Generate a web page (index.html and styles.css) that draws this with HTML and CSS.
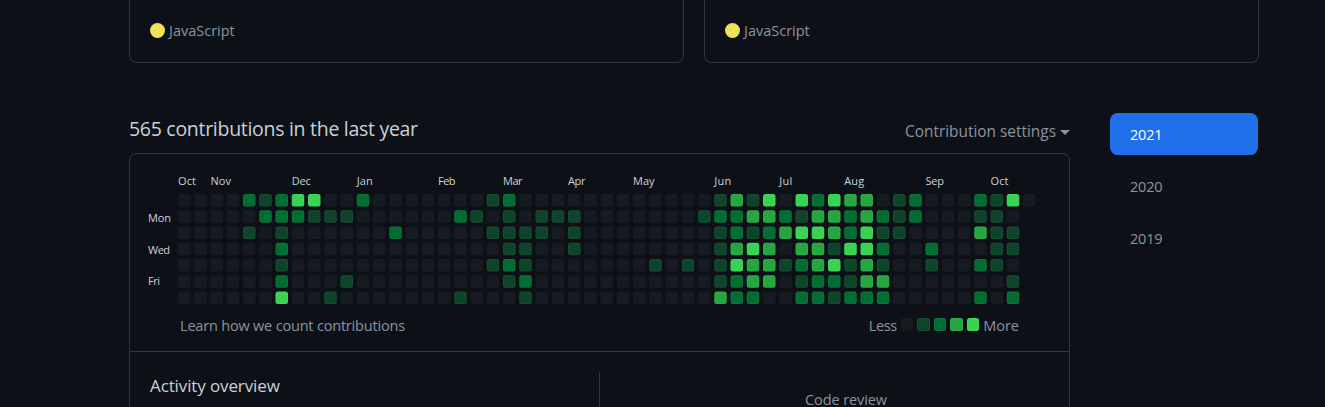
FILE: index.html
```html
<!DOCTYPE html>
<html lang="en">
<head>
<meta charset="utf-8">
<title>Contributions</title>
<link rel="stylesheet" href="styles.css">
</head>
<body>
<div class="page">
  <div class="repos">
    <div class="repo"><span class="lang-dot"></span><span class="lang">JavaScript</span></div>
    <div class="repo"><span class="lang-dot"></span><span class="lang">JavaScript</span></div>
  </div>
  <div class="columns">
    <main class="main">
      <div class="head">
        <h2 class="title">565 contributions in the last year</h2>
        <div class="settings"><span>Contribution settings</span><span class="caret"></span></div>
      </div>
      <section class="box">
        <svg class="graph" width="939" height="151" viewBox="130 154 939 151">
          <g id="cells"></g>
          <g id="months" class="label"></g>
          <g class="label">
            <text x="148" y="222" textLength="23">Mon</text>
            <text x="148" y="254" textLength="22">Wed</text>
            <text x="148" y="285" textLength="12">Fri</text>
          </g>
        </svg>
        <div class="legend">
          <span class="learn">Learn how we count contributions</span>
          <div class="scale">
            <span class="less">Less</span>
            <span class="swatches"><i class="sw l0"></i><i class="sw l1"></i><i class="sw l2"></i><i class="sw l3"></i><i class="sw l4"></i></span>
            <span class="more">More</span>
          </div>
        </div>
        <div class="activity">
          <div class="overview"><h3 class="subtitle">Activity overview</h3></div>
          <div class="radar"><span class="review">Code review</span></div>
        </div>
      </section>
    </main>
    <nav class="years">
      <a class="year selected"><span>2021</span></a>
      <a class="year"><span>2020</span></a>
      <a class="year"><span>2019</span></a>
    </nav>
  </div>
</div>
<script src="graph.js"></script>
</body>
</html>
```
FILE: graph.js
```js
// One string per week, Sunday first; each digit is a contribution level.
const weeks = `0000000 0000000 0000000 0000000 2010000 1200000 2212124 4200000 4100000
0100001 0100010 2000000 0000000 0020000 0000000 0000000 0000000 0200001 0100000
1010100 2111210 0011121 0110000 0100000 0111000 0000000 0000000 0000000 0000000
0000100 0000000 0000100 0100000 1211113 3223422 1314332 4323330 0230100 4143212
2343322 4331421 3224112 3344332 0212132 1110000 2200000 0002100 0000000 0000000
2130202 1111100 4011012 0`.split(/\s+/);
const months = [["Oct", 0, 18], ["Nov", 2, 20.5], ["Dec", 7, 19], ["Jan", 11, 16], ["Feb", 16, 17.5],
  ["Mar", 20, 19.5], ["Apr", 24, 17.5], ["May", 28, 21.5], ["Jun", 33, 17], ["Jul", 37, 13],
  ["Aug", 41, 20], ["Sep", 46, 18.5], ["Oct", 50, 18]];
const NS = "http://www.w3.org/2000/svg";
const left = 178, top0 = 194, pitch = 16.25;

function add(parent, tag, attrs) {
  const el = document.createElementNS(NS, tag);
  for (const k in attrs) el.setAttribute(k, attrs[k]);
  parent.appendChild(el);
  return el;
}

const cells = document.getElementById("cells");
weeks.forEach((week, c) => [...week].forEach((level, r) => {
  const x = left + c * pitch, y = top0 + r * pitch;
  add(cells, "rect", { x, y, width: 12.5, height: 12.5, rx: 2.5, class: "l" + level });
  add(cells, "rect", { x: x + .5, y: y + .5, width: 11.5, height: 11.5, rx: 2, class: level === "0" ? "edge faint" : "edge" });
}));
months.forEach(([name, c, w]) => {
  add(document.getElementById("months"), "text", { x: left + c * pitch, y: 185, textLength: w }).textContent = name;
});
```
FILE: styles.css
```css
* { box-sizing: border-box; }
body {
  margin: 0;
  height: 407px;
  overflow: hidden;
  background: #0d1117;
  color: #8b949e;
  font-family: "Open Sans", "Noto Sans", sans-serif;
  font-size: 14.5px;
  line-height: 20px;
}
.page { width: 1130px; margin-left: 129px; white-space: nowrap; }
.repos { display: grid; grid-template-columns: 555px 555px; gap: 20px; }
.repo {
  display: flex;
  align-items: center;
  gap: 4px;
  height: 63px;
  padding: 0 20px 1px;
  border: 1px solid #30363d;
  border-top: 0;
  border-radius: 0 0 7.5px 7.5px;
}
.lang-dot { width: 15px; height: 15px; border-radius: 50%; background: #f1e05a; }
.lang { letter-spacing: 0; }
.columns { display: flex; gap: 40px; padding-top: 50px; }
.main { width: 941px; }
.head { display: flex; justify-content: space-between; height: 40px; }
.title { margin: 0; padding-top: 2px; font-size: 19.5px; font-weight: 400; line-height: 28px; letter-spacing: -0.29px; color: #c9d1d9; }
.settings { display: flex; align-items: center; gap: 4px; height: 38px; font-size: 15.4px; }
.caret { border: 5px solid transparent; border-top-color: #8b949e; border-bottom: 0; }
.box { border: 1px solid #30363d; border-radius: 7.5px 7.5px 0 0; height: 260px; }
.graph { display: block; }
.label { font-size: 11px; fill: #c9d1d9; }
.l0 { fill: #161b22; background: #161b22; }
.l1 { fill: #0e4429; background: #0e4429; }
.l2 { fill: #006d32; background: #006d32; }
.l3 { fill: #26a641; background: #26a641; }
.l4 { fill: #39d353; background: #39d353; }
.edge { fill: none; stroke: rgba(255, 255, 255, .05); }
.faint { stroke: rgba(255, 255, 255, .01); }
.legend { display: flex; justify-content: space-between; height: 46px; padding: 11px 50px 0 50px; }
.learn { letter-spacing: -0.19px; }
.scale { display: flex; gap: 4px; }
.less { letter-spacing: -0.4px; }
.swatches { display: flex; gap: 4px; padding-top: 2px; }
.sw { width: 12.5px; height: 12.5px; border-radius: 2.5px; box-shadow: inset 0 0 0 1px rgba(255, 255, 255, .05); }
.sw.l0 { box-shadow: none; }
.activity { display: flex; height: 57px; padding: 20px 20px 0; border-top: 1px solid #30363d; }
.overview { width: 450px; border-right: 1px solid #30363d; }
.subtitle { margin: 0; font-size: 17px; font-weight: 400; line-height: 27px; letter-spacing: -0.12px; color: #c9d1d9; }
.radar { padding: 18px 0 0 205px; }
.review { letter-spacing: -0.1px; }
.years { display: flex; flex-direction: column; gap: 10px; width: 148px; }
.year { height: 42px; padding: 12px 20px 10px; border-radius: 7.5px; letter-spacing: -0.2px; }
.selected { background: #1f6feb; color: #fff; }
```
